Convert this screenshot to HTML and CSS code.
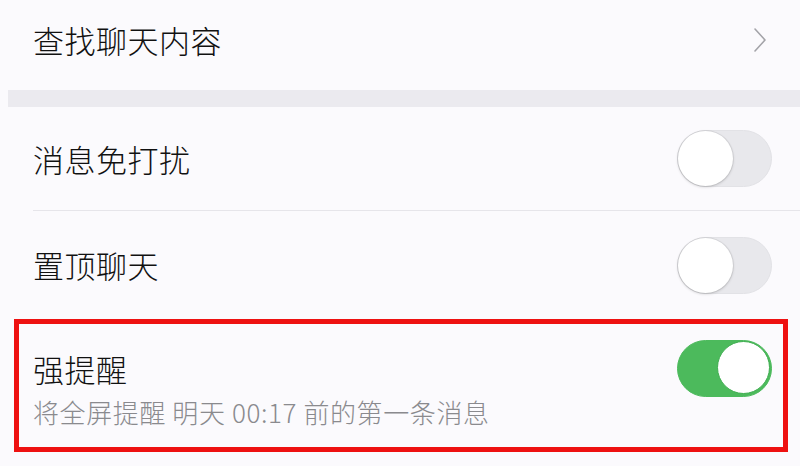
FILE: index.html
```html
<!DOCTYPE html>
<html lang="zh-CN">
	<head>
		<meta charset="UTF-8">
		<title>聊天信息</title>
		<link rel="stylesheet" href="styles.css">
	</head>
	<body>
		<div class="row search">
			<span class="label">查找聊天内容</span>
			<svg class="chevron" width="14" height="24" viewBox="0 0 14 24">
				<path d="M2 1 L12 12 L2 23" fill="none" stroke="#a3a3a8" stroke-width="1.6" stroke-linecap="round" stroke-linejoin="round"/>
			</svg>
		</div>
		<div class="band"></div>

		<div class="row setting">
			<span class="label">消息免打扰</span>
			<span class="switch"><span class="knob"></span></span>
		</div>
		<div class="divider"></div>
		<div class="row setting top">
			<span class="label">置顶聊天</span>
			<span class="switch"><span class="knob"></span></span>
		</div>

		<div class="highlight">
			<div class="row head">
				<span class="label">强提醒</span>
				<span class="switch on"><span class="knob"></span></span>
			</div>
			<div class="sub">将全屏提醒 明天 00:17 前的第一条消息</div>
		</div>
	</body>
</html>
```

FILE: styles.css
```css
html, body {
	margin: 0;
	padding: 0;
}

body {
	background: #fbfafd;
	font-family: "Noto Sans CJK SC", "Noto Sans", sans-serif;
	font-weight: 300;
	color: #111;
	width: 800px;
	height: 466px;
	overflow: hidden;
}

.row {
	display: flex;
	align-items: center;
	justify-content: space-between;
	padding: 0 28px 0 33px;
}

.label {
	font-size: 31px;
	line-height: 40px;
	letter-spacing: 0.5px;
}

.search {
	height: 80px;
	padding-right: 33px;
	margin-bottom: 10px;
}

.chevron {
	display: block;
}

.band {
	height: 17px;
	margin-left: 8px;
	background: #ebeaef;
}

.setting {
	height: 103px;
}

.setting.top {
	height: 108px;
}

.divider {
	height: 1px;
	margin-left: 33px;
	background: #e6e5ea;
}

/* toggle */
.switch {
	position: relative;
	display: block;
	width: 95px;
	height: 57px;
	box-sizing: border-box;
	border-radius: 29px;
	background: #e8e8ec;
	border: 1px solid #e2e2e6;
}

.switch .knob {
	position: absolute;
	left: 0;
	top: 0;
	width: 55px;
	height: 55px;
	border-radius: 50%;
	background: #fff;
	box-shadow: 0 1px 3px rgba(0, 0, 0, 0.18), 0 0 0 1px rgba(0, 0, 0, 0.06);
}

.switch.on {
	background: #4cba5c;
	border-color: #4cba5c;
}

.switch.on .knob {
	left: auto;
	right: 1px;
	top: 0;
	width: 51px;
	height: 51px;
	box-shadow: none;
	border: 1px solid #3fae50;
	box-sizing: content-box;
}

/* red box */
.highlight {
	margin: 0 12px 0 14px;
	border: 5px solid #ee1111;
	padding: 16px 0 20px;
}

.highlight .head {
	padding: 0 11px 0 14px;
}

.sub {
	padding-left: 14px;
	font-size: 26px;
	line-height: 30px;
	letter-spacing: 0.6px;
	color: #8a8a8e;
}
```
